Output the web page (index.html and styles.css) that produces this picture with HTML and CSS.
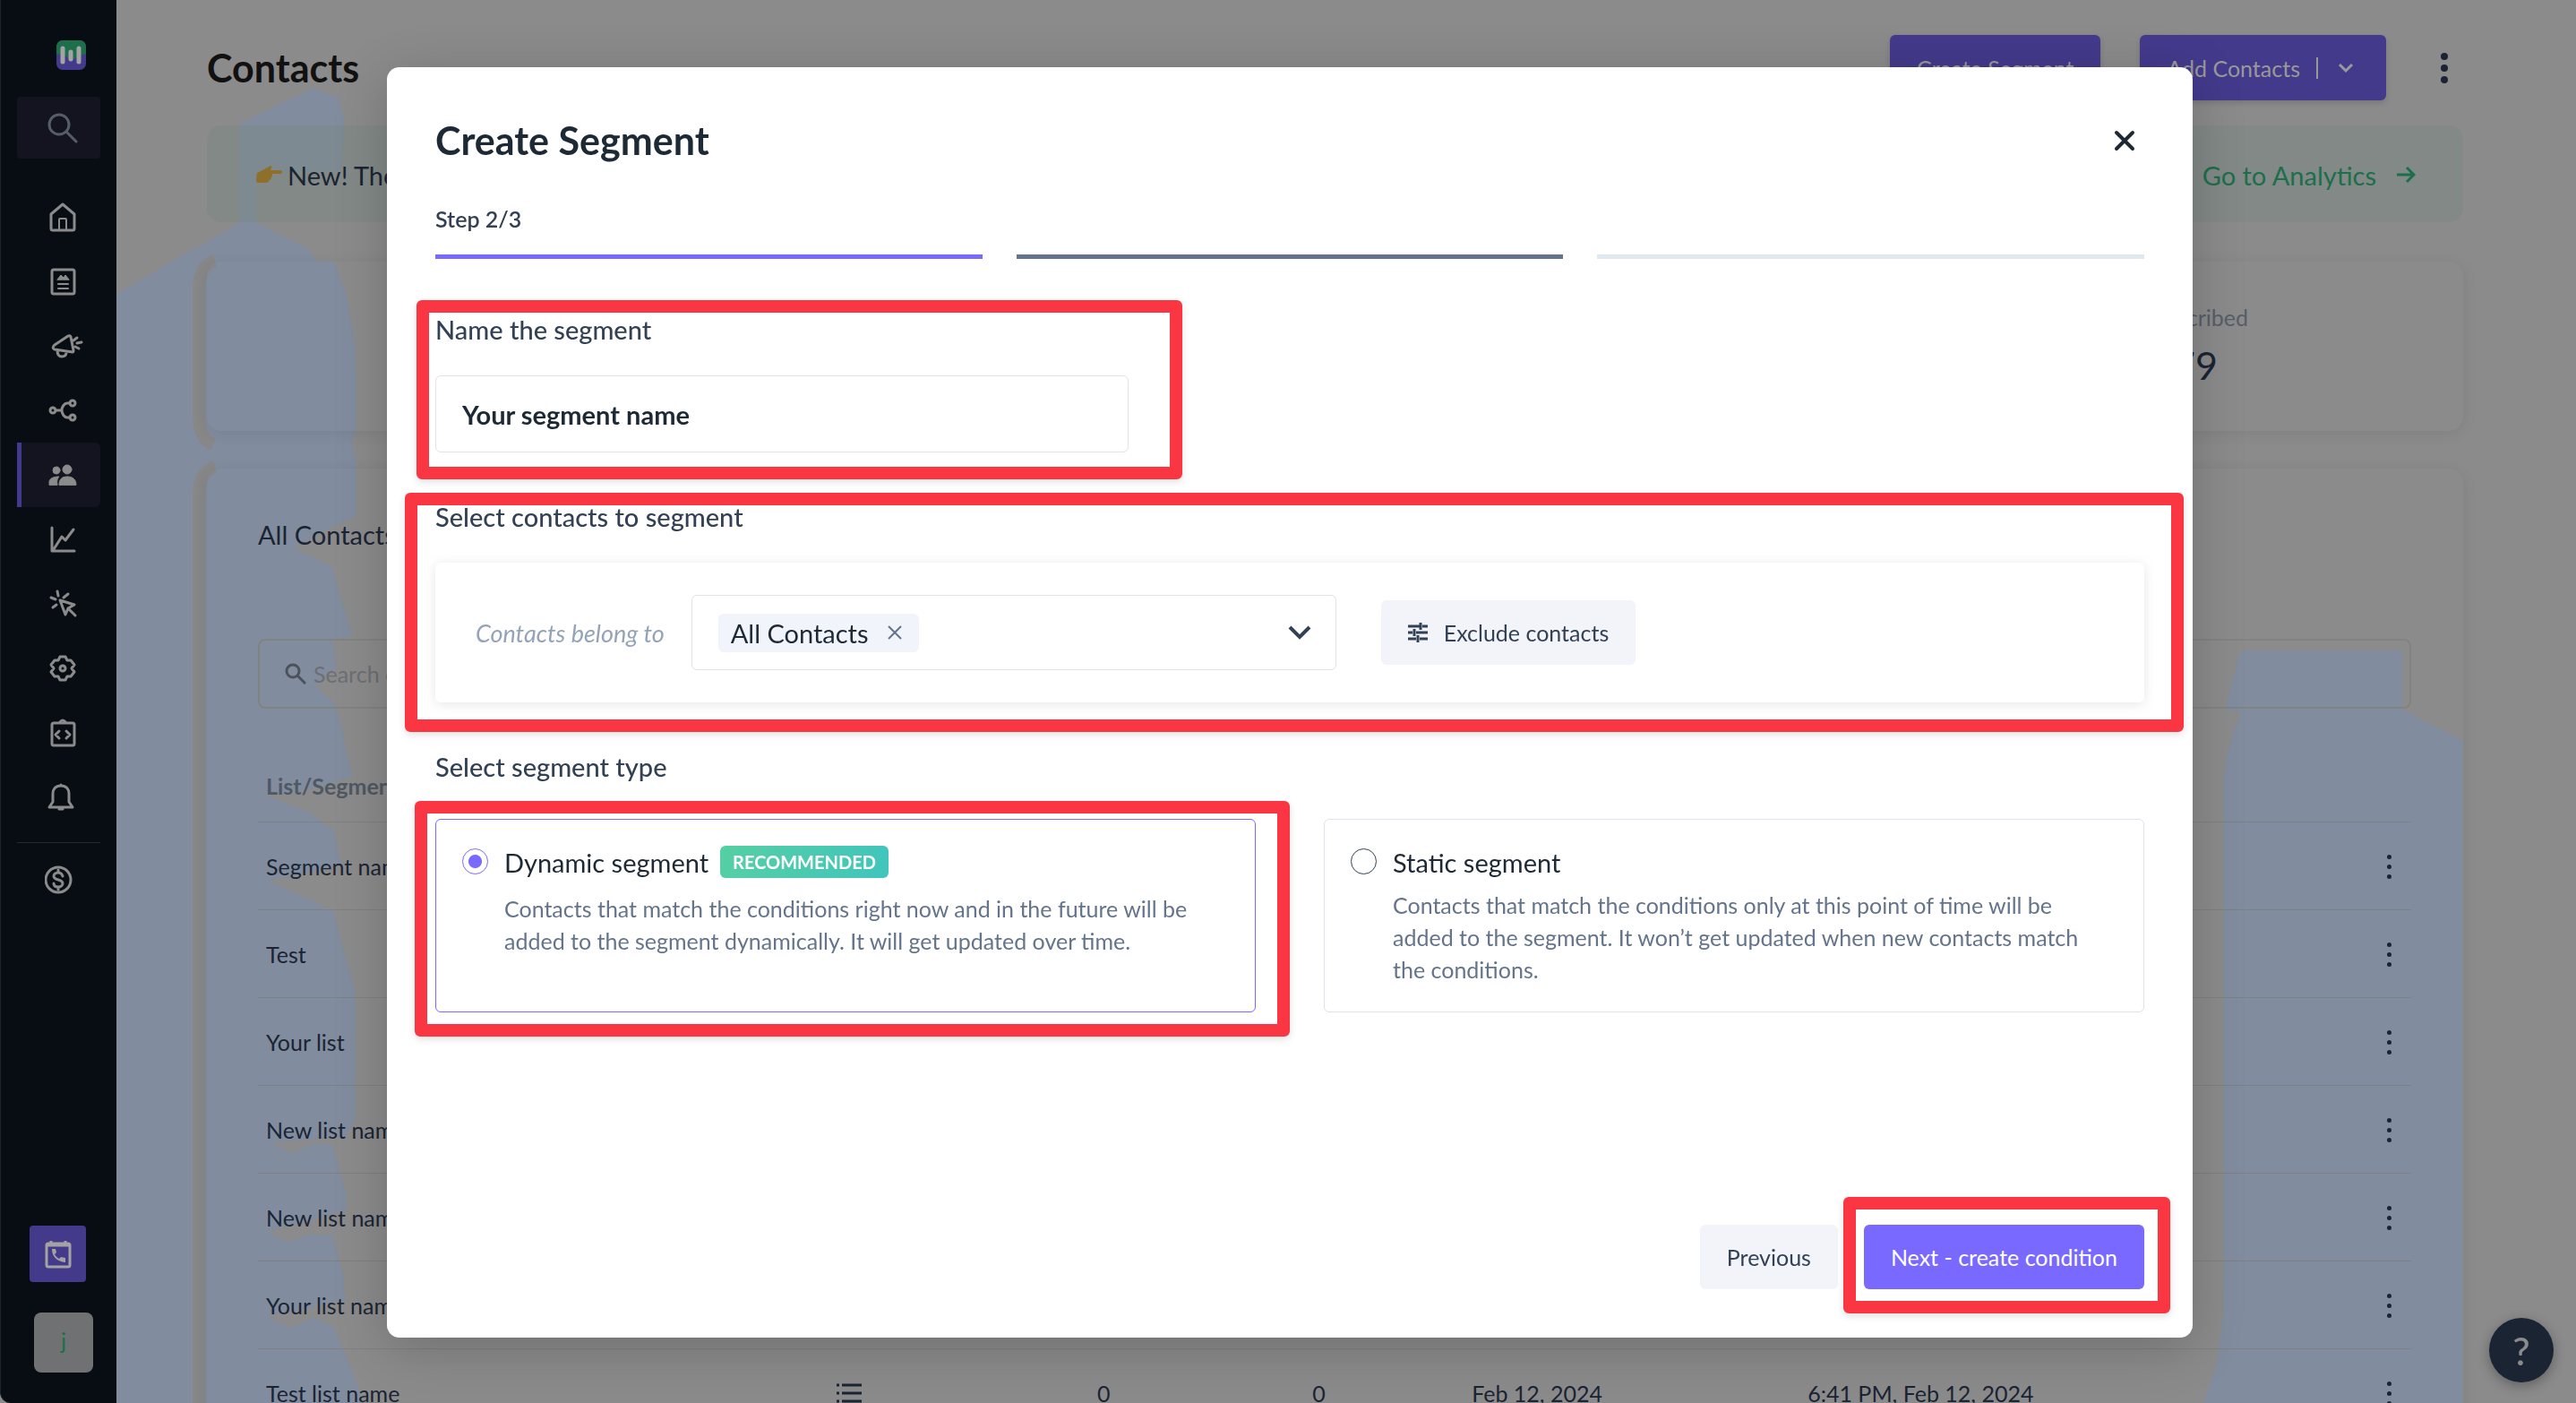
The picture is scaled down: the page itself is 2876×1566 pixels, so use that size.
FILE: index.html
```html
<!DOCTYPE html>
<html lang="en">
<head>
  <meta charset="UTF-8">
  <meta name="viewport" content="width=device-width, initial-scale=1.0">
  <title>Contacts - Create Segment</title>
  <link rel="stylesheet" href="styles.css">
</head>
<body>
  <aside class="sidebar">
    <a class="logo" href="#" aria-label="Home page">
      <svg width="33" height="33" viewBox="0 0 33 33">
        <rect width="33" height="33" rx="7" fill="#433a8c"/>
        <path d="M0 16V7a7 7 0 0 1 7-7h19a7 7 0 0 1 7 7v9c-4-1-7 0-10 3-4 3-8 3-12-1-3-2-7-3-11-2z" fill="#1c6f4a"/>
        <path d="M7 9v15M16 13v8M25 9v15" stroke="#a3a3a3" stroke-width="5" stroke-linecap="round"/>
      </svg>
    </a>
    <button class="side-search" aria-label="Search">
      <svg width="34" height="34" viewBox="0 0 34 34" fill="none" stroke="#555e68" stroke-width="3" stroke-linecap="round">
        <circle cx="13" cy="13" r="11"/><path d="M21 21l11 11"/>
      </svg>
    </button>
    <nav class="side-nav">
      <a href="#" aria-label="Home"><svg class="icon" viewBox="0 0 44 34"><path d="M7 30V14L20 3l13 11v16q0 2-2 2H9q-2 0-2-2z"/><path d="M16 31V20q0-1 1-1h6q1 0 1 1v11" stroke-width="2"/></svg></a>
      <a href="#" aria-label="Forms"><svg class="icon" viewBox="0 0 44 34"><rect x="8" y="4" width="25" height="27" rx="2"/><path d="M14 15l4-5 3 3 2-3 4 5z" class="solid"/><path d="M15 20h11M15 25h11" stroke-width="2"/></svg></a>
      <a href="#" aria-label="Campaigns"><svg class="icon" viewBox="0 0 44 34"><path d="M10 17q-2 3 1 4l20 3q1 0 1-2L29 7q-1-2-3-1L11 16zM14 22q0 7 5 7t5-5M32 11l4-3M36 14l5-1M34 18l4 2"/></svg></a>
      <a href="#" aria-label="Automations"><svg class="icon" viewBox="0 0 44 34"><circle cx="9" cy="17" r="3"/><circle cx="31" cy="9" r="3"/><circle cx="31" cy="25" r="3"/><path d="M12 17h7M28 9h-3c-3 0-6 4-6 8s3 8 6 8h3"/></svg></a>
      <a href="#" class="active" aria-label="Contacts"><svg class="icon" viewBox="0 0 44 34"><g class="solid"><circle cx="13" cy="12" r="4"/><circle cx="25" cy="11" r="5"/><path d="M5 28v-3c0-4 5-6 11-6-2 2-3 5-2 9zM16 28c0-6 3-9 9-9s10 3 10 9z"/></g></svg></a>
      <a href="#" aria-label="Analytics"><svg class="icon" viewBox="0 0 44 34"><path d="M8 4v26h25M10 28l9-14 4 4 9-12"/></svg></a>
      <a href="#" aria-label="Tracking"><svg class="icon" viewBox="0 0 44 34"><path d="M17 13l16 5-7 4-3 7zM27 23l7 7M14 3l1 5M26 6l-5 4M7 10l5 2M9 21l4-3"/></svg></a>
      <a href="#" aria-label="Settings"><svg class="icon" viewBox="0 0 44 34"><path d="M17 4h6l2 4 4 0 4 5-3 4 3 4-4 5-4 0-2 4h-6l-2-4-4 0-4-5 3-4-3-4 4-5 4 0z"/><circle cx="20" cy="17" r="3"/></svg></a>
      <a href="#" aria-label="Developers"><svg class="icon" viewBox="0 0 44 34"><rect x="8" y="6" width="25" height="25" rx="2"/><path d="M17 5q3-4 6 0M16 15l-4 4 4 4M24 15l4 4-4 4"/></svg></a>
      <a href="#" aria-label="Notifications"><svg class="icon" viewBox="0 0 44 34"><path d="M18 4c-6 0-9 4-9 9v9l-4 6h26l-4-6v-9c0-5-3-9-9-9zM18 3v1M16 30h4"/></svg></a>
    </nav>
    <hr class="side-rule">
    <nav class="side-nav">
      <a href="#" aria-label="Billing"><svg class="icon" viewBox="0 0 44 34"><circle cx="15" cy="17" r="14"/><path d="M20 13c-1-3-3-4-5-4-3 0-5 2-5 4 0 5 10 3 10 8 0 2-2 4-5 4s-5-1-5-4M15 6v3M15 25v3"/></svg></a>
    </nav>
    <div class="side-bottom">
      <button class="call-btn" aria-label="Schedule a call">
        <svg width="32" height="32" viewBox="0 0 32 32" fill="none" stroke="#a3a3a3" stroke-width="3">
          <rect x="3" y="4" width="26" height="26" rx="2"/><path d="M3 6h26M8 1v4M24 1v4"/>
          <path d="M9 10c0 9 6 14 15 15v-5l-5-1-2 2c-2-1-4-3-5-5l2-2-1-4h-4z" fill="#a3a3a3" stroke="none"/>
        </svg>
      </button>
      <button class="avatar">j</button>
    </div>
  </aside>

  <main class="page">
    <!-- soft blue shapes behind the cards -->
    <svg class="backdrop-shape" viewBox="0 0 320 1566" width="320" height="1566">
      <path d="M138 139L220 99 248 110 254 139 250 190H155V249L215 280 222 292H242L256 330 265 380 267 430V481L262 490 267 518V575L235 590 195 612 240 633 250 670 262 708 240 716 245 745 220 765 242 785 250 810 262 866 215 880 165 888 215 908 242 928 250 965 200 976 165 982 215 1005 242 1018 252 1060 266 1105V1250L255 1268 170 1275 195 1288 220 1278H240L255 1330 256 1350 165 1375 192 1387 215 1379H240L252 1420 254 1450 165 1470 195 1483 220 1472 242 1482 262 1530 275 1566H0V330L70 288 138 250z" fill="#818c9e" stroke="#818c9e" stroke-width="2" stroke-linejoin="round"/>
      <path d="M110 291q-18 5-18 33v140q0 25 16 32M110 521q-18 5-18 33v1012" fill="none" stroke="#878788" stroke-width="14"/>
    </svg>
    <svg class="backdrop-shape right" viewBox="0 0 290 840" width="290" height="840">
      <path d="M41 0h181v67l8 3 60 31v739H0l14-40 8-60V160q0-50 21-92l-19-1z" fill="#818c9e"/>
    </svg>

    <header class="page-head">
      <h1>Contacts</h1>
      <div class="head-actions">
        <button class="dim-btn">Create Segment</button>
        <button class="dim-btn">Add Contacts <span class="bar"></span>
          <svg width="18" height="12" viewBox="0 0 18 12" fill="none" stroke="#9a9a9a" stroke-width="3"><path d="M2 2l7 7 7-7"/></svg>
        </button>
        <button class="kebab big" aria-label="More"><i></i><i></i><i></i></button>
      </div>
    </header>

    <section class="banner">
      <p class="banner-text">
        <svg width="30" height="20" viewBox="0 0 30 20" fill="#8f702a"><path d="M2 8l8-4 7-4q2 0 1 3l-1 2h11q2 0 2 2t-2 2h-9q1 2-1 4 0 2-2 3-1 3-5 3H4q-3 0-3-3z"/></svg>
        New! The analytics page is here
      </p>
      <a class="banner-link" href="#">Go to Analytics
        <svg width="22" height="20" viewBox="0 0 22 20" fill="none" stroke="#1c6f4a" stroke-width="3"><path d="M1 10h18M12 2l8 8-8 8"/></svg>
      </a>
    </section>

    <section class="card stats">
      <div class="stat">
        <span class="stat-label">Unsubscribed</span>
        <span class="stat-value">79</span>
      </div>
    </section>

    <section class="card lists">
      <h2>All Contacts</h2>
      <div class="search">
        <svg width="24" height="24" viewBox="0 0 24 24" fill="none" stroke="#4a525c" stroke-width="3"><circle cx="9" cy="9" r="7"/><path d="M14 14l9 9"/></svg>
        <input type="text" placeholder="Search contacts" aria-label="Search contacts">
      </div>
      <table>
        <colgroup>
          <col class="c-name"><col class="c-type"><col class="c-num"><col class="c-num2"><col class="c-date"><col><col class="c-menu">
        </colgroup>
        <thead>
          <tr><th>List/Segment name</th><th></th><th></th><th></th><th></th><th></th><th></th></tr>
        </thead>
        <tbody>
          <tr><td>Segment name</td><td></td><td></td><td></td><td></td><td></td><td><button class="kebab" aria-label="Row menu"><i></i><i></i><i></i></button></td></tr>
          <tr><td>Test</td><td></td><td></td><td></td><td></td><td></td><td><button class="kebab" aria-label="Row menu"><i></i><i></i><i></i></button></td></tr>
          <tr><td>Your list</td><td></td><td></td><td></td><td></td><td></td><td><button class="kebab" aria-label="Row menu"><i></i><i></i><i></i></button></td></tr>
          <tr><td>New list name</td><td></td><td></td><td></td><td></td><td></td><td><button class="kebab" aria-label="Row menu"><i></i><i></i><i></i></button></td></tr>
          <tr><td>New list name</td><td></td><td></td><td></td><td></td><td></td><td><button class="kebab" aria-label="Row menu"><i></i><i></i><i></i></button></td></tr>
          <tr><td>Your list name</td><td></td><td></td><td></td><td></td><td></td><td><button class="kebab" aria-label="Row menu"><i></i><i></i><i></i></button></td></tr>
          <tr>
            <td>Test list name</td>
            <td><svg width="28" height="22" viewBox="0 0 28 22" stroke="#1a2433" stroke-width="3"><path d="M0 2h3M6 2h22M0 11h3M6 11h22M0 20h3M6 20h22"/></svg></td>
            <td>0</td><td>0</td><td>Feb 12, 2024</td><td>6:41 PM, Feb 12, 2024</td>
            <td><button class="kebab" aria-label="Row menu"><i></i><i></i><i></i></button></td>
          </tr>
        </tbody>
      </table>
    </section>
  </main>

  <button class="help" aria-label="Help">?</button>

  <div class="overlay">
    <form class="modal" role="dialog" aria-labelledby="modal-title">
      <header class="modal-head">
        <h2 id="modal-title">Create Segment</h2>
        <button type="button" class="close" aria-label="Close">
          <svg width="24" height="24" viewBox="0 0 24 24" stroke="#1e2936" stroke-width="4" stroke-linecap="round"><path d="M3 3l18 18M21 3L3 21"/></svg>
        </button>
      </header>
      <p class="step">Step 2/3</p>
      <div class="progress"><span class="done"></span><span class="current"></span><span></span></div>

      <section class="field field-name">
        <label class="field-label" for="segment-name">Name the segment</label>
        <div class="mark mark-name"></div>
        <input class="name-input" id="segment-name" type="text" value="Your segment name">
      </section>

      <section class="field">
        <h3 class="field-label">Select contacts to segment</h3>
        <div class="mark mark-contacts"></div>
        <div class="rule">
          <span class="rule-text">Contacts belong to</span>
          <div class="picker">
            <span class="chip">All Contacts
              <button type="button" aria-label="Remove All Contacts"><svg width="18" height="18" viewBox="0 0 18 18" stroke="#64748b" stroke-width="2"><path d="M2 2l14 14M16 2L2 16"/></svg></button>
            </span>
            <button type="button" class="picker-open" aria-label="Open list"><svg width="28" height="18" viewBox="0 0 28 18" fill="none" stroke="#334155" stroke-width="4"><path d="M3 3l11 11L25 3"/></svg></button>
          </div>
          <button type="button" class="btn light">
            <svg width="22" height="22" viewBox="0 0 22 22" stroke="#334155" stroke-width="3"><path d="M0 4h13M16 4h6M14 0v8M0 11h5M9 11h13M7 7v8M0 18h9M13 18h9M11 14v8"/></svg>
            Exclude contacts
          </button>
        </div>
      </section>

      <section class="field field-type">
        <h3 class="field-label">Select segment type</h3>
        <div class="types">
          <div class="type selected">
            <div class="mark mark-type"></div>
            <input type="radio" name="type" id="dynamic" checked>
            <label for="dynamic">
              <span class="type-title">Dynamic segment <b class="badge">RECOMMENDED</b></span>
              <span class="type-desc">Contacts that match the conditions right now and in the future will be added to the segment dynamically. It will get updated over time.</span>
            </label>
          </div>
          <div class="type">
            <input type="radio" name="type" id="static">
            <label for="static">
              <span class="type-title">Static segment</span>
              <span class="type-desc">Contacts that match the conditions only at this point of time will be added to the segment. It won’t get updated when new contacts match the conditions.</span>
            </label>
          </div>
        </div>
      </section>

      <footer class="modal-foot">
        <button type="button" class="btn light">Previous</button>
        <div class="next">
          <div class="mark mark-next"></div>
          <button type="submit" class="btn primary">Next - create condition</button>
        </div>
      </footer>
    </form>
  </div>
</body>
</html>
```

FILE: styles.css
```css
* {
  box-sizing: border-box;
}
body {
  margin: 0;
  height: 100vh;
  overflow: hidden;
  display: flex;
  font-family: Lato, "Open Sans", sans-serif;
  font-size: 25px;
  color: #1a2433;
  background: #8b8b8b;
}
h1, h2, h3, p {
  margin: 0;
}
button {
  font: inherit;
  border: none;
  padding: 0;
  cursor: pointer;
  background: none;
}
a {
  text-decoration: none;
}
svg {
  display: block;
}

/* Sidebar */
.sidebar {
  width: 130px;
  flex: none;
  height: 100vh;
  padding: 45px 18px 34px;
  display: flex;
  flex-direction: column;
  background: #080d14;
  border-left: 1px solid #1a2433;
  border-bottom-left-radius: 12px;
}
.logo {
  margin-left: 44px;
}
.side-search {
  height: 69px;
  margin: 30px 0 29px;
  padding-left: 34px;
  border-radius: 4px;
  background: #131420;
}
.side-nav a {
  display: flex;
  align-items: center;
  height: 72px;
  padding-left: 31px;
}
.side-nav a.active {
  padding-left: 26px;
  border-left: 5px solid #433a8c;
  border-radius: 0 6px 6px 0;
  background: #131420;
}
.icon {
  width: 44px;
  height: 34px;
  fill: none;
  stroke: #8b8b8b;
  stroke-width: 3;
  stroke-linecap: round;
  stroke-linejoin: round;
}
.icon .solid {
  fill: #8b8b8b;
  stroke-width: 1;
}
.side-rule {
  width: 100%;
  margin: 14px 0 5px;
  border: none;
  border-top: 1px solid #232936;
}
.side-bottom {
  margin-top: auto;
  display: flex;
  flex-direction: column;
  gap: 34px;
}
.call-btn {
  width: 63px;
  height: 63px;
  margin-left: 14px;
  display: flex;
  align-items: center;
  justify-content: center;
  border-radius: 4px;
  background: #433a8c;
}
.avatar {
  width: 66px;
  height: 67px;
  margin-left: 19px;
  padding-bottom: 6px;
  border-radius: 8px;
  color: #1c6f4a;
  background: #707173;
}

/* Contacts page */
.page {
  position: relative;
  flex: 1;
  height: 100vh;
  overflow: hidden;
  padding: 39px 126px 0 101px;
}
.page > * {
  position: relative;
}
.page > .backdrop-shape {
  position: absolute;
  left: 0;
  top: 0;
}
.page > .backdrop-shape.right {
  left: auto;
  right: 126px;
  top: 726px;
}
.page-head {
  display: flex;
  align-items: center;
  justify-content: space-between;
  height: 73px;
}
.page-head h1 {
  font-size: 43px;
  color: #111;
}
.head-actions {
  display: flex;
  align-items: center;
  gap: 44px;
}
.dim-btn {
  height: 73px;
  padding: 0 30px;
  display: flex;
  align-items: center;
  gap: 18px;
  border-radius: 6px;
  color: #999;
  background: #433a8c;
  box-shadow: 0 3px 6px rgba(0, 0, 0, 0.15);
}
.bar {
  width: 2px;
  height: 24px;
  margin-right: 4px;
  background: #999;
}
.dim-btn svg {
  margin-right: 6px;
}
.kebab {
  width: 32px;
  height: 40px;
  display: flex;
  flex-direction: column;
  align-items: center;
  justify-content: center;
  gap: 6px;
}
.kebab i {
  width: 5px;
  height: 5px;
  border-radius: 50%;
  background: #1a2433;
}
.kebab.big {
  width: 42px;
  gap: 5px;
}
.kebab.big i {
  width: 8px;
  height: 8px;
}
.banner {
  display: flex;
  align-items: center;
  justify-content: space-between;
  height: 108px;
  margin-top: 28px;
  padding: 2px 53px 0 54px;
  border-radius: 16px;
  font-size: 29px;
  background: rgba(122, 135, 131, 0.5);
}
.banner-text,
.banner-link {
  display: flex;
  align-items: center;
  gap: 6px;
}
.banner-link {
  gap: 22px;
  color: #1c6f4a;
}
.card {
  border-radius: 16px;
  box-shadow: 0 3px 16px rgba(0, 0, 0, 0.08);
}
.stats {
  display: flex;
  justify-content: flex-end;
  height: 189px;
  margin-top: 44px;
  padding: 46px 240px 0 58px;
}
.stat {
  display: flex;
  flex-direction: column;
  align-items: flex-end;
}
.stat-label {
  line-height: 32px;
  color: #555e68;
}
.stat-value {
  margin-top: 12px;
  padding-right: 34px;
  font-size: 43px;
  line-height: 52px;
}
.lists {
  height: 1200px;
  margin-top: 42px;
  padding: 56px 58px 0 57px;
}
.lists h2 {
  font-size: 29px;
  font-weight: 400;
  line-height: 36px;
}
.search {
  display: flex;
  align-items: center;
  gap: 8px;
  height: 78px;
  margin: 98px 0 46px;
  padding: 0 28px;
  border: 2px solid #7f8382;
  border-radius: 8px;
}
.search input {
  flex: 1;
  border: none;
  outline: none;
  padding: 0;
  font: inherit;
  background: none;
}
.search input::placeholder {
  color: #6c6f73;
  opacity: 1;
}
table {
  width: 100%;
  table-layout: fixed;
  border-collapse: collapse;
}
.c-name { width: 26.5%; }
.c-type { width: 12.1%; }
.c-num { width: 10%; }
.c-num2 { width: 7.4%; }
.c-date { width: 15.6%; }
.c-menu { width: 50px; }
th, td {
  height: 98px;
  padding: 2px 9px 0;
  text-align: left;
  white-space: nowrap;
  border-bottom: 1px solid #7e8081;
}
th {
  height: 80px;
  padding-top: 0;
  color: #4f5863;
}
.help {
  position: fixed;
  right: 25px;
  bottom: 23px;
  width: 72px;
  height: 72px;
  border-radius: 50%;
  font-size: 43px;
  font-weight: 500;
  color: #8b8b8b;
  background: #1a2433;
  box-shadow: 0 4px 14px rgba(0, 0, 0, 0.3);
}

/* Modal */
.overlay {
  position: fixed;
  inset: 0;
  display: flex;
  padding: 75px 428px 73px 432px;
}
.modal {
  flex: 1;
  display: flex;
  flex-direction: column;
  padding: 53px 54px 54px;
  border-radius: 14px;
  color: #1e2936;
  background: #fff;
  box-shadow: 0 12px 60px rgba(0, 0, 0, 0.2);
}
.modal-head {
  display: flex;
  align-items: center;
  justify-content: space-between;
}
.modal-head h2 {
  font-size: 43px;
  line-height: 58px;
}
.close {
  padding: 10px;
}
.step {
  margin: 42px 0 24px;
  line-height: 32px;
  font-weight: 600;
  color: #334155;
}
.progress {
  display: flex;
  gap: 38px;
}
.progress span {
  flex: 1;
  height: 5px;
  background: #e2e8f0;
}
.progress .done {
  background: #7a69ff;
}
.progress .current {
  background: #64748b;
}
.field {
  position: relative;
  margin-top: 54px;
}
.field-name {
  margin-top: 61px;
}
.field-label {
  display: block;
  margin-bottom: 33px;
  font-size: 29px;
  font-weight: 500;
  line-height: 36px;
  color: #334155;
}
.field-type .field-label {
  margin-bottom: 40px;
}
.name-input {
  display: block;
  width: 774px;
  height: 86px;
  padding: 0 29px;
  border: 1px solid #e0e2ec;
  border-radius: 6px;
  font: 700 29px Lato, sans-serif;
  color: #1e2936;
}
.rule {
  display: flex;
  align-items: center;
  height: 156px;
  padding: 0 45px;
  border-radius: 6px;
  box-shadow: 0 2px 14px rgba(0, 0, 0, 0.1);
}
.rule-text {
  font-size: 27px;
  font-style: italic;
  color: #94a3b8;
}
.picker {
  display: flex;
  align-items: center;
  justify-content: space-between;
  width: 720px;
  height: 84px;
  margin: 0 50px 0 30px;
  padding: 0 26px 0 29px;
  border: 1px solid #e0e2ec;
  border-radius: 6px;
}
.chip {
  display: flex;
  align-items: center;
  gap: 20px;
  height: 43px;
  padding: 0 18px 0 14px;
  border-radius: 6px;
  font-size: 29px;
  background: #f1f4fb;
}
.btn {
  display: flex;
  align-items: center;
  gap: 18px;
  height: 72px;
  padding: 0 30px;
  border-radius: 6px;
  white-space: nowrap;
}
.btn.light {
  color: #334155;
  background: #f2f4f9;
}
.btn.primary {
  color: #fff;
  background: #7a69ff;
}
.types {
  display: grid;
  grid-template-columns: 1fr 1fr;
  gap: 76px;
}
.type {
  position: relative;
  display: flex;
  align-items: flex-start;
  gap: 18px;
  min-height: 216px;
  padding: 29px 48px 29px 29px;
  border: 1px solid #e0e2ec;
  border-radius: 6px;
}
.type.selected {
  border-color: #7a69ff;
}
.type input {
  appearance: none;
  flex: none;
  width: 29px;
  height: 29px;
  margin: 3px 0 0;
  border: 1px solid #334155;
  border-radius: 50%;
}
.type input:checked {
  border-color: #7a69ff;
  background: radial-gradient(circle, #7a69ff 7px, #fff 8px);
}
.type-title {
  display: flex;
  align-items: center;
  gap: 13px;
  min-height: 36px;
  font-size: 29px;
}
.type-desc {
  display: block;
  margin-top: 12px;
  line-height: 36px;
  color: #64748b;
}
.selected .type-desc {
  margin-top: 16px;
}
.badge {
  padding: 0 14px;
  border-radius: 6px;
  font-size: 20px;
  line-height: 36px;
  color: #fff;
  background: linear-gradient(100deg, #55cfa3, #41c5bd);
}
.modal-foot {
  display: flex;
  justify-content: flex-end;
  gap: 29px;
  margin-top: auto;
}
.next {
  position: relative;
}

/* Red frames that point out the parts to fill in */
.mark {
  position: absolute;
  border: 14px solid #fa3643;
  border-radius: 6px;
  box-shadow: 0 3px 8px rgba(0, 0, 0, 0.12);
  pointer-events: none;
}
.mark-name {
  top: -15px;
  bottom: -30px;
  left: -21px;
  width: 855px;
}
.mark-contacts {
  inset: -9px -44px -33px -34px;
}
.mark-type {
  inset: -21px -39px -28px -24px;
}
.mark-next {
  inset: -31px -29px -27px -23px;
}
```
